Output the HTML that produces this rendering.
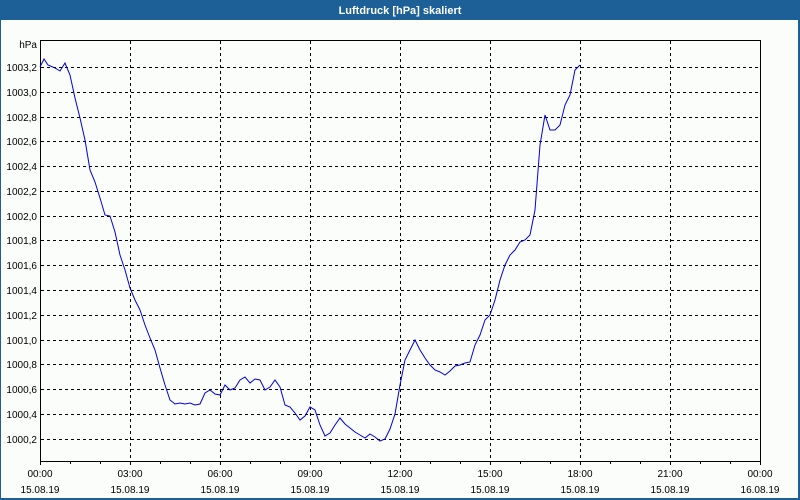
<!DOCTYPE html>
<html><head><meta charset="utf-8"><style>
body{margin:0;width:800px;height:500px;overflow:hidden;background:#fbfdfb;font-family:"Liberation Sans",sans-serif}
</style></head><body>
<svg width="800" height="500" xmlns="http://www.w3.org/2000/svg" style="display:block">
<rect x="0" y="0" width="800" height="500" fill="#1d5f97"/>
<rect x="1" y="20" width="797" height="478" fill="#fbfdfb"/>
<text x="400" y="14" text-anchor="middle" font-size="11" font-weight="bold" fill="#fff" font-family="Liberation Sans, sans-serif">Luftdruck [hPa] skaliert</text>
<g stroke="#000" stroke-width="1" stroke-dasharray="3,3" shape-rendering="crispEdges">
<line x1="130.5" y1="41" x2="130.5" y2="461"/><line x1="220.5" y1="41" x2="220.5" y2="461"/><line x1="310.5" y1="41" x2="310.5" y2="461"/><line x1="400.5" y1="41" x2="400.5" y2="461"/><line x1="490.5" y1="41" x2="490.5" y2="461"/><line x1="580.5" y1="41" x2="580.5" y2="461"/><line x1="670.5" y1="41" x2="670.5" y2="461"/>
<line x1="41" y1="67.5" x2="760" y2="67.5"/><line x1="41" y1="92.5" x2="760" y2="92.5"/><line x1="41" y1="117.5" x2="760" y2="117.5"/><line x1="41" y1="141.5" x2="760" y2="141.5"/><line x1="41" y1="166.5" x2="760" y2="166.5"/><line x1="41" y1="191.5" x2="760" y2="191.5"/><line x1="41" y1="216.5" x2="760" y2="216.5"/><line x1="41" y1="240.5" x2="760" y2="240.5"/><line x1="41" y1="265.5" x2="760" y2="265.5"/><line x1="41" y1="290.5" x2="760" y2="290.5"/><line x1="41" y1="315.5" x2="760" y2="315.5"/><line x1="41" y1="340.5" x2="760" y2="340.5"/><line x1="41" y1="364.5" x2="760" y2="364.5"/><line x1="41" y1="389.5" x2="760" y2="389.5"/><line x1="41" y1="414.5" x2="760" y2="414.5"/><line x1="41" y1="439.5" x2="760" y2="439.5"/>
</g>
<rect x="40.5" y="40.5" width="720" height="421" fill="none" stroke="#000" stroke-width="1" shape-rendering="crispEdges"/>
<g stroke="#000" shape-rendering="crispEdges">
<path d="M40.5 461v4M70.5 461v3M100.5 461v3M130.5 461v4M160.5 461v3M190.5 461v3M220.5 461v4M250.5 461v3M280.5 461v3M310.5 461v4M340.5 461v3M370.5 461v3M400.5 461v4M430.5 461v3M460.5 461v3M490.5 461v4M520.5 461v3M550.5 461v3M580.5 461v4M610.5 461v3M640.5 461v3M670.5 461v4M700.5 461v3M730.5 461v3M760.5 461v4"/>
</g>
<g font-size="10" fill="#000" text-anchor="end" font-family="Liberation Sans, sans-serif">
<text x="37" y="48">hPa</text>
<text x="37" y="71">1003,2</text><text x="37" y="96">1003,0</text><text x="37" y="121">1002,8</text><text x="37" y="145">1002,6</text><text x="37" y="170">1002,4</text><text x="37" y="195">1002,2</text><text x="37" y="220">1002,0</text><text x="37" y="244">1001,8</text><text x="37" y="269">1001,6</text><text x="37" y="294">1001,4</text><text x="37" y="319">1001,2</text><text x="37" y="344">1001,0</text><text x="37" y="368">1000,8</text><text x="37" y="393">1000,6</text><text x="37" y="418">1000,4</text><text x="37" y="443">1000,2</text>
</g>
<g font-size="10" fill="#000" text-anchor="middle" font-family="Liberation Sans, sans-serif">
<text x="40" y="477">00:00</text><text x="130" y="477">03:00</text><text x="220" y="477">06:00</text><text x="310" y="477">09:00</text><text x="400" y="477">12:00</text><text x="490" y="477">15:00</text><text x="580" y="477">18:00</text><text x="670" y="477">21:00</text><text x="760" y="477">00:00</text>
<text x="40" y="493">15.08.19</text><text x="130" y="493">15.08.19</text><text x="220" y="493">15.08.19</text><text x="310" y="493">15.08.19</text><text x="400" y="493">15.08.19</text><text x="490" y="493">15.08.19</text><text x="580" y="493">15.08.19</text><text x="670" y="493">15.08.19</text><text x="760" y="493">16.08.19</text>
</g>
<polyline fill="none" stroke="#0000e0" stroke-width="1" points="40,67 44,59 48,65 55,68 60,71 65,63 70,75 75,98 80,118 85,140 90,170 95,182 100,198 105,215 110,216 115,232 120,255 125,270 130,288 135,300 140,310 145,325 150,338 155,350 160,368 165,385 170,400 175,404 180,403 185,404 190,403 195,405 200,404 205,393 210,390 215,394 220,395 225,385 230,390 235,388 240,380 245,377 250,383 255,379 260,380 265,390 270,387 275,380 280,387 285,405 290,407 295,413 300,420 305,416 310,407 315,410 320,425 325,436 330,433 335,425 340,418 345,424 350,428 355,432 360,435 365,438 370,434 375,437 380,441 385,439 390,429 395,414 400,385 405,360 410,350 415,340 420,350 425,358 430,365 435,370 440,372 445,375 450,371 455,366 460,365 465,363 470,362 475,345 480,335 485,320 490,315 495,300 500,280 505,265 510,255 515,250 520,242 525,240 530,235 535,210 540,145 545,115 550,130 555,130 560,125 565,105 570,95 575,70 580,65"/>
</svg>
</body></html>
